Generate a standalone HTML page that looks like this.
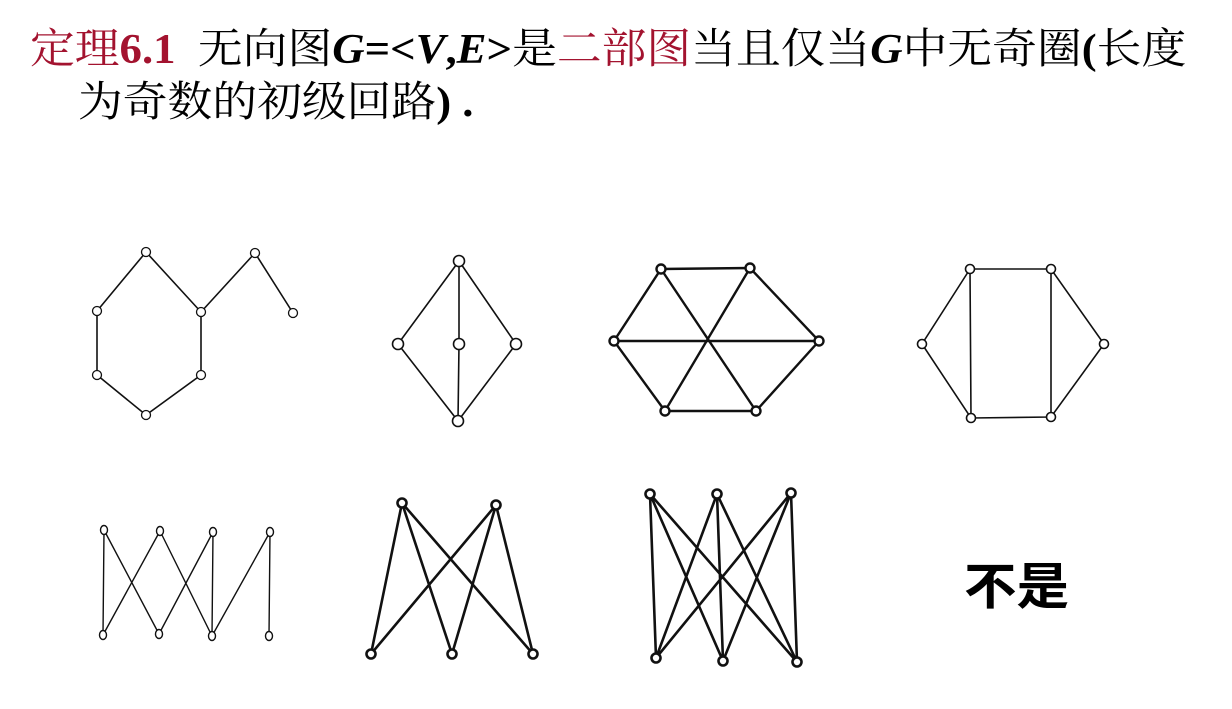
<!DOCTYPE html>
<html><head><meta charset="utf-8"><style>
body{margin:0;width:1232px;height:709px;background:#fff;overflow:hidden;position:relative;font-family:"Liberation Serif","Noto Serif CJK SC",serif;}
.t{position:absolute;font-size:42px;line-height:1;white-space:nowrap;color:#000;transform-origin:0 0;transform:scaleX(1.066);}
.r{color:#a3132f}
b i{font-weight:bold}
</style></head><body>
<div class="t" style="left:30px;top:29px"><span class="r">定理<b>6.1</b></span>&nbsp; 无向图<b><i>G</i>=&lt;<i>V</i>,<i>E</i>&gt;</b>是<span class="r">二部图</span>当且仅当<b><i>G</i></b>中无奇圈<b>(</b>长度</div>
<div class="t" style="left:78px;top:82px">为奇数的初级回路<b>) .</b></div>
<div class="t" style="left:964px;top:562px;font-size:50px;transform:scaleX(1.05);font-weight:bold;font-family:'Liberation Sans','Noto Sans CJK SC',sans-serif">不是</div>
<svg width="1232" height="709" style="position:absolute;left:0;top:0" fill="#fff" stroke="#111">
<g stroke-width="1.6">
<polyline fill="none" points="97,311 146,252 201,312 201,375 146,415 97,375 97,311"/>
<polyline fill="none" points="201,312 255,253 293,313"/>
<g stroke-width="1.3"><circle cx="146" cy="252" r="4.5"/><circle cx="97" cy="311" r="4.5"/><circle cx="201" cy="312" r="4.5"/><circle cx="97" cy="375" r="4.5"/><circle cx="201" cy="375" r="4.5"/><circle cx="146" cy="415" r="4.5"/><circle cx="255" cy="253" r="4.5"/><circle cx="293" cy="313" r="4.5"/></g>
<path fill="none" d="M459 261L398 344L458 421L516 344L459 261L459 344L458 421"/>
<circle cx="459" cy="261" r="5.5"/><circle cx="398" cy="344" r="5.5"/><circle cx="459" cy="344" r="5.5"/><circle cx="516" cy="344" r="5.5"/><circle cx="458" cy="421" r="5.5"/>
</g>
<g stroke-width="2.4">
<path fill="none" d="M661 269L750 268L819 341L756 411L665 411L614 341Z M661 269L756 411 M750 268L665 411 M614 341L819 341"/>
<circle cx="661" cy="269" r="4.5"/><circle cx="750" cy="268" r="4.5"/><circle cx="819" cy="341" r="4.5"/><circle cx="756" cy="411" r="4.5"/><circle cx="665" cy="411" r="4.5"/><circle cx="614" cy="341" r="4.5"/>
</g>
<g stroke-width="1.6">
<path fill="none" d="M970 269L1051 269L1104 344L1051 417L971 418L922 344Z M970 269L971 418 M1051 269L1051 417"/>
<circle cx="970" cy="269" r="4.5"/><circle cx="1051" cy="269" r="4.5"/><circle cx="1104" cy="344" r="4.5"/><circle cx="1051" cy="417" r="4.5"/><circle cx="971" cy="418" r="4.5"/><circle cx="922" cy="344" r="4.5"/>
</g>
<g stroke-width="1.4">
<path fill="none" d="M104 530L103 635 M104 530L159 634 M160 531L103 635 M160 531L212 636 M213 532L159 634 M213 532L212 636 M270 532L212 636 M270 532L269 636"/>
<ellipse cx="104" cy="530" rx="3.5" ry="4.5"/><ellipse cx="160" cy="531" rx="3.5" ry="4.5"/><ellipse cx="213" cy="532" rx="3.5" ry="4.5"/><ellipse cx="270" cy="532" rx="3.5" ry="4.5"/>
<ellipse cx="103" cy="635" rx="3.5" ry="4.5"/><ellipse cx="159" cy="634" rx="3.5" ry="4.5"/><ellipse cx="212" cy="636" rx="3.5" ry="4.5"/><ellipse cx="269" cy="636" rx="3.5" ry="4.5"/>
</g>
<g stroke-width="2.6">
<path fill="none" d="M402 503L371 654 M402 503L452 654 M402 503L533 654 M496 505L371 654 M496 505L452 654 M496 505L533 654"/>
<circle cx="402" cy="503" r="4.5"/><circle cx="496" cy="505" r="4.5"/><circle cx="371" cy="654" r="4.5"/><circle cx="452" cy="654" r="4.5"/><circle cx="533" cy="654" r="4.5"/>
<path fill="none" d="M650 494L656 658 M650 494L723 661 M650 494L797 662 M717 494L656 658 M717 494L723 661 M717 494L797 662 M791 493L656 658 M791 493L723 661 M791 493L797 662"/>
<circle cx="650" cy="494" r="4.5"/><circle cx="717" cy="494" r="4.5"/><circle cx="791" cy="493" r="4.5"/><circle cx="656" cy="658" r="4.5"/><circle cx="723" cy="661" r="4.5"/><circle cx="797" cy="662" r="4.5"/>
</g>
</svg>
</body></html>
